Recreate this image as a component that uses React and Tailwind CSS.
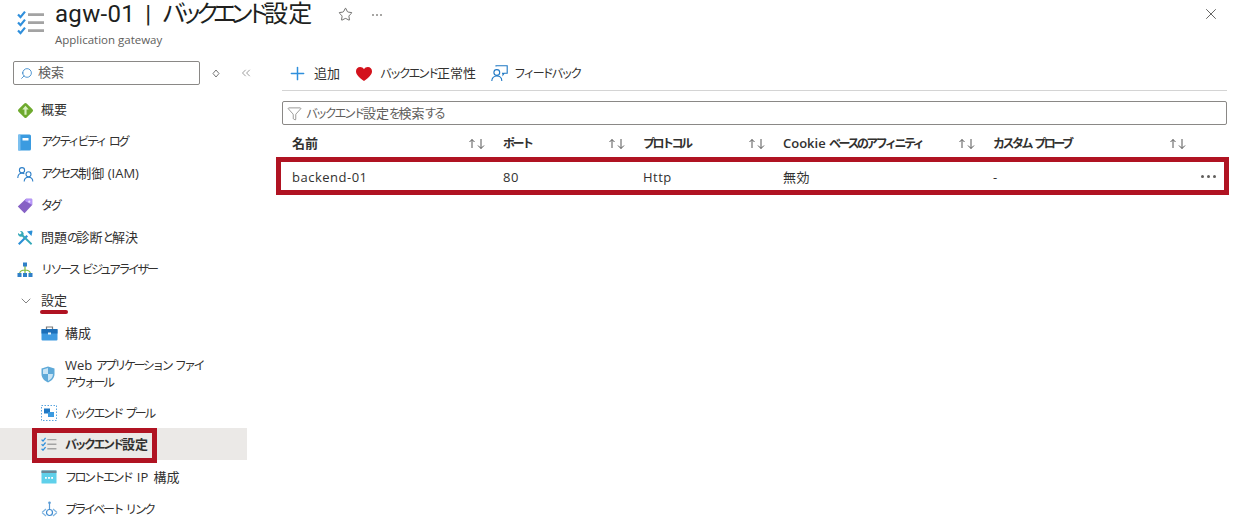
import { X, Star, Plus, Search, Funnel, ChevronDown, ChevronsLeft } from "lucide-react";

const FONT = "font-['Open_Sans','Noto_Sans_CJK_JP',sans-serif]";

// kana in the reference is much narrower than the CJK font's, so runs get squeezed
function Ja({ children, kana = "text-[12px] tracking-[-0.21em]" }) {
  return children.split(/([ぁ-んァ-ヶー]+)/).map((part, i) =>
    i % 2 === 1 ? <span key={i} className={kana}>{part}</span> : <span key={i}>{part}</span>
  );
}

function ChecklistIcon({ size = 28 }) {
  return (
    <svg width={size} height={size * 0.9} viewBox="0 0 28 25" fill="none">
      <path d="M1 4.500 3.500 7 8 1.500M1 12.500 3.500 15 8 9.500M1 20.500 3.500 23 8 17.500" stroke="#2f8fdc" strokeWidth="2.200" />
      <path d="M11 4.500h16M11 12.500h16M11 20.500h16" stroke="#a3a3a3" strokeWidth="2.600" />
    </svg>
  );
}

function OverviewIcon() {
  return (
    <svg width="17" height="17" viewBox="0 0 16 16">
      <rect x="2.600" y="2.600" width="10.800" height="10.800" rx="1.500" transform="rotate(45 8 8)" fill="#6eaa2e" />
      <path d="M8 3.500 11 7H9v5H7V7H5z" fill="#d8f0c0" />
    </svg>
  );
}

function BookIcon() {
  return (
    <svg width="15" height="17" viewBox="0 0 15 17">
      <rect x="1" y="0.500" width="13" height="16" rx="1.500" fill="#3b9be0" />
      <rect x="1" y="0.500" width="2.500" height="16" fill="#7cc0ef" />
      <rect x="5.500" y="4" width="6" height="2.500" fill="#fff" />
    </svg>
  );
}

function PeopleIcon({ color = "#2f80c8" }) {
  return (
    <svg width="17" height="15" viewBox="0 0 17 15" fill="none" stroke={color} strokeWidth="1.100">
      <circle cx="5" cy="3.200" r="2.600" />
      <path d="M0.800 11c0-3 1.700-4.800 4.200-4.800 1 0 1.800.2 2.400.7" />
      <circle cx="11.500" cy="7.200" r="2.500" />
      <path d="M7.200 14.600c0-2.600 1.700-4.400 4.300-4.400s4.300 1.800 4.300 4.400" />
    </svg>
  );
}

function TagIcon() {
  return (
    <svg width="16" height="16" viewBox="0 0 16 16">
      <path d="M9 .8h5.200c.6 0 1 .4 1 1V7L7.500 15.200.8 8.500z" fill="#8661c5" />
      <path d="M9 .8h5.200c.6 0 1 .4 1 1V7L8 3z" fill="#b796f9" />
      <circle cx="12.300" cy="3.700" r="1.100" fill="#e8dcff" />
    </svg>
  );
}

function ToolsIcon() {
  return (
    <svg width="16" height="16" viewBox="0 0 16 16">
      <path d="M2.500 15 1 13.500 9.500 5 11 6.500z" fill="#2b8fd6" />
      <path d="M10 1.500 14.500 6 15.500 1 15 .5z" fill="#2b8fd6" />
      <path d="M1 3a3 3 0 0 0 4 3.500L14 15l1.200-1.500L6.500 5A3 3 0 0 0 3 1L4.700 3 3 4.600z" fill="#35a9b8" />
    </svg>
  );
}

function TopologyIcon() {
  return (
    <svg width="16" height="16" viewBox="0 0 16 16">
      <path d="M8 4v7M2.500 11.500C3 9 5 8 8 8s5 1 5.500 3.500" fill="none" stroke="#7fba3c" strokeWidth="1.200" />
      <rect x="6" y="0.500" width="4" height="4" fill="#2f80c8" />
      <rect x="0.500" y="11" width="4" height="4" fill="#2f80c8" />
      <rect x="6" y="11" width="4" height="4" fill="#2f80c8" />
      <rect x="11.500" y="11" width="4" height="4" fill="#2f80c8" />
    </svg>
  );
}

function BriefcaseIcon() {
  return (
    <svg width="17" height="15" viewBox="0 0 17 15">
      <path d="M5.500 3V1h6v2" fill="none" stroke="#7a7a7a" strokeWidth="1.200" />
      <rect x="0.500" y="3" width="16" height="11.500" rx="1" fill="#3f9ae0" />
      <rect x="0.500" y="3" width="16" height="4.500" fill="#1d6fb8" />
      <rect x="7" y="6.500" width="3" height="2" fill="#e8f4fd" />
    </svg>
  );
}

function ShieldIcon() {
  return (
    <svg width="14" height="17" viewBox="0 0 14 17">
      <path d="M7 .5 13.500 2.500V8c0 4-3 7-6.500 8.500C3.500 15 .5 12 .5 8V2.500z" fill="#5ea9d8" />
      <path d="M7 2 2 3.500V8h5zM7 8v7c2.800-1.300 5-3.800 5-7z" fill="#c8e4f5" />
    </svg>
  );
}

function PoolIcon() {
  return (
    <svg width="16" height="16" viewBox="0 0 16 16">
      <rect x="0.500" y="0.500" width="15" height="15" fill="none" stroke="#5aa5de" strokeDasharray="1.500 1.500" />
      <rect x="3" y="3.500" width="6" height="5" fill="#1f78c4" />
      <rect x="7" y="7" width="6" height="5" fill="#3b9be0" />
    </svg>
  );
}

function FrontendIcon() {
  return (
    <svg width="16" height="14" viewBox="0 0 16 14">
      <rect x="0.500" y="0.500" width="15" height="13" rx="0.500" fill="#5fd0ea" />
      <rect x="0.500" y="0.500" width="15" height="2.500" fill="#6b8796" />
      <rect x="4" y="7" width="1.800" height="1.800" fill="#fff" />
      <rect x="7.100" y="7" width="1.800" height="1.800" fill="#fff" />
      <rect x="10.200" y="7" width="1.800" height="1.800" fill="#fff" />
    </svg>
  );
}

function PrivateLinkIcon() {
  return (
    <svg width="17" height="17" viewBox="0 0 17 17" fill="none">
      <path d="M8.500 1v8" stroke="#5a9bd5" strokeWidth="1.200" />
      <circle cx="8.500" cy="1.800" r="1.300" fill="#5a9bd5" />
      <path d="M1 11.500 5 8M16 11.500 12 8M1 11.500 5 15M16 11.500 12 15" stroke="#7fb4e0" strokeWidth="1.200" />
      <circle cx="8.500" cy="11.500" r="3" stroke="#3f8bd0" strokeWidth="1.200" />
    </svg>
  );
}

function HeartIcon() {
  return (
    <svg width="16" height="14" viewBox="0 0 16 14">
      <path d="M8 14C3 10.200 0 7.500 0 4.200 0 1.800 1.800 0 4.100 0 5.700 0 7.200.8 8 2.200 8.800.8 10.300 0 11.900 0 14.200 0 16 1.800 16 4.200c0 3.300-3 6-8 9.800z" fill="#d3121c" />
    </svg>
  );
}

function FeedbackIcon() {
  return (
    <svg width="17" height="17" viewBox="0 0 17 17" fill="none" stroke="#1f78c4" strokeWidth="1.100">
      <circle cx="5.800" cy="7.500" r="2.900" />
      <path d="M.8 16c0-3 2-5 5-5s5 2 5 5" />
      <path d="M5 1.500V.8h11.200v7.400h-3l-1.200 1.600V8.200h-1" />
    </svg>
  );
}

function SortIcon() {
  return (
    <svg width="18" height="12" viewBox="0 0 18 12" fill="none" stroke="#555" strokeWidth="1">
      <path d="M4 10V1.500M1.500 4l2.500-2.500L6.500 4" />
      <path d="M13 1v9.500M10 7.500l3 3 3-3" />
    </svg>
  );
}

const navItems = [
  { icon: <OverviewIcon />, label: "概要" },
  { icon: <BookIcon />, label: "アクティビティ ログ" },
  { icon: <PeopleIcon />, label: "アクセス制御 (IAM)" },
  { icon: <TagIcon />, label: "タグ" },
  { icon: <ToolsIcon />, label: "問題の診断と解決" },
  { icon: <TopologyIcon />, label: "リソース ビジュアライザー" },
];

const subItems = [
  { icon: <BriefcaseIcon />, label: "構成", h: "h-[36px]" },
  { icon: <ShieldIcon />, lines: ["Web アプリケーション ファイ", "アウォール"], h: "h-[46px]" },
  { icon: <PoolIcon />, label: "バックエンド プール", h: "h-[31px]" },
  { icon: <ChecklistIcon size={16} />, label: "バックエンド設定", h: "h-[32px]", active: true },
  { icon: <FrontendIcon />, label: "フロントエンド IP 構成", h: "h-[33px]", wide: true },
  { icon: <PrivateLinkIcon />, label: "プライベート リンク", h: "h-[32px]" },
];

const columns = [
  { label: "名前", w: "w-[211px]", value: "backend-01" },
  { label: "ポート", w: "w-[140px]", value: "80" },
  { label: "プロトコル", w: "w-[140px]", value: "Http" },
  { label: "Cookie ベースのアフィニティ", w: "w-[210px]", value: "無効" },
  { label: "カスタム プローブ", w: "w-[211px]", value: "-" },
];

function Sidebar() {
  return (
    <aside className="w-[247px] shrink-0 flex flex-col">
      <div className="h-[29px] flex items-center pl-[13px] pt-[3px] shrink-0">
        <div className="w-[187px] h-[24px] shrink-0 border border-[#8a8886] rounded-[2px] flex items-center pl-[6px] gap-[5px]">
          <Search size={13} strokeWidth={1.4} className="text-[#1f78c4] -scale-x-100" />
          <span className="text-[13px] text-[#605e5c]">検索</span>
        </div>
        <svg width="8" height="9" viewBox="0 0 8 9" fill="none" stroke="#777" className="ml-[12px] shrink-0">
          <path d="M4 1 7 4.500 4 8 1 4.500z" />
        </svg>
        <ChevronsLeft size={14} strokeWidth={1.1} className="text-[#666] ml-[19px] shrink-0" />
      </div>
      <div className="h-[8px] shrink-0" />
      {navItems.map((item) => (
        <div key={item.label} className="h-[32px] flex items-center pl-[17px] shrink-0">
          <span className="w-[24px] flex">{item.icon}</span>
          <span className="text-[13px] text-[#323130] whitespace-nowrap"><Ja>{item.label}</Ja></span>
        </div>
      ))}
      <div className="h-[29px] flex items-center pl-[18px] shrink-0 relative">
        <ChevronDown size={16} strokeWidth={1} className="text-[#444] mr-[7px]" />
        <span className="text-[13px] text-[#323130]">設定</span>
        <div className="absolute left-[40px] top-[24px] w-[28px] h-[4px] rounded-full bg-[#b01322]" />
      </div>
      {subItems.map((item, i) => (
        <div
          key={i}
          className={`${item.h} flex items-center pl-[41px] shrink-0 relative ${item.active ? "bg-[#ebe9e7]" : ""}`}
        >
          <span className="w-[24px] flex">{item.icon}</span>
          {item.lines ? (
            <div className="text-[13px] text-[#323130] leading-[17px] whitespace-nowrap">
              {item.lines.map((line) => <div key={line}><Ja>{line}</Ja></div>)}
            </div>
          ) : (
            <span className={`text-[13px] text-[#323130] whitespace-nowrap mt-[2px] ${item.active ? "font-bold" : ""} ${item.wide ? "[word-spacing:2px]" : ""}`}>
              <Ja>{item.label}</Ja>
            </span>
          )}
          {item.active && (
            <div className="absolute left-[32px] top-0 w-[125px] h-[35px] border-[5px] border-[#b01322]" />
          )}
        </div>
      ))}
    </aside>
  );
}

function Main() {
  return (
    <main className="flex-1 pl-[35px] pr-[7px]">
      <div className="h-[34px] flex items-center border-b border-[#d4d4d4]">
        <Plus size={21} strokeWidth={1.7} className="text-[#2f8fdc] ml-[5px] mr-[6px]" />
        <span className="text-[13px] text-[#323130]">追加</span>
        <span className="ml-[16px] mr-[8px] flex"><HeartIcon /></span>
        <span className="text-[13px] text-[#323130]"><Ja>バックエンド正常性</Ja></span>
        <span className="ml-[15px] mr-[6px] flex"><FeedbackIcon /></span>
        <span className="text-[13px] text-[#323130]"><Ja>フィードバック</Ja></span>
      </div>
      <div className="mt-[10px] h-[24px] border border-[#8a8886] rounded-[2px] flex items-center pl-[4px] gap-[4px]">
        <Funnel size={15} strokeWidth={1} className="text-[#605e5c]" />
        <span className="text-[13px] text-[#605e5c] mt-[2px]"><Ja>バックエンド設定を検索する</Ja></span>
      </div>
      <div className="flex h-[32px] items-center pl-[10px] pt-[6px]">
        {columns.map((col) => (
          <div key={col.label} className={`${col.w} flex items-center justify-between pr-[17px]`}>
            <span className="text-[13px] font-semibold text-[#323130]"><Ja>{col.label}</Ja></span>
            <SortIcon />
          </div>
        ))}
      </div>
      <div className="relative flex h-[38px] items-center pl-[10px]">
        {columns.map((col) => (
          <div key={col.label} className={`${col.w} text-[13px] tracking-[0.5px] text-[#323130] mt-[4px]`}>{col.value}</div>
        ))}
        <div className="absolute right-[11px] top-[18px] flex gap-[3px]">
          <div className="w-[3px] h-[3px] rounded-full bg-[#605e5c]" />
          <div className="w-[3px] h-[3px] rounded-full bg-[#605e5c]" />
          <div className="w-[3px] h-[3px] rounded-full bg-[#605e5c]" />
        </div>
        <div className="absolute -left-[6px] -right-[2px] top-0 h-[38px] border-[5px] border-[#b01322]" />
      </div>
    </main>
  );
}

export default function App() {
  return (
    <div className={`h-[523px] overflow-hidden bg-white flex flex-col ${FONT}`}>
      <header className="h-[57px] shrink-0 flex pl-[17px] pt-[10px] relative">
        <span className="w-[38px] shrink-0"><ChecklistIcon /></span>
        <div className="-mt-[10px]">
          <div className="flex items-center h-[29px]">
            <h1 className="flex text-[24px] font-normal font-['Roboto','Noto_Sans_CJK_JP',sans-serif] text-[#201f1e] leading-[29px] whitespace-pre tracking-[0.3px] [word-spacing:4px]">
              <Ja kana="tracking-[-0.29em]">agw-01 | バックエンド設定</Ja>
            </h1>
            <Star size={15} strokeWidth={1.1} className="text-[#323130] ml-[25px]" />
            <div className="ml-[19px] flex gap-[2px]">
              <div className="w-[2px] h-[2px] rounded-full bg-[#8a8886]" />
              <div className="w-[2px] h-[2px] rounded-full bg-[#8a8886]" />
              <div className="w-[2px] h-[2px] rounded-full bg-[#8a8886]" />
            </div>
          </div>
          <div className="text-[11.500px] text-[#605e5c] mt-[2px]">Application gateway</div>
        </div>
        <X size={18} strokeWidth={1} className="absolute left-[1202px] top-[5px] text-[#323130]" />
      </header>
      <div className="flex flex-1 min-h-0">
        <Sidebar />
        <Main />
      </div>
    </div>
  );
}
